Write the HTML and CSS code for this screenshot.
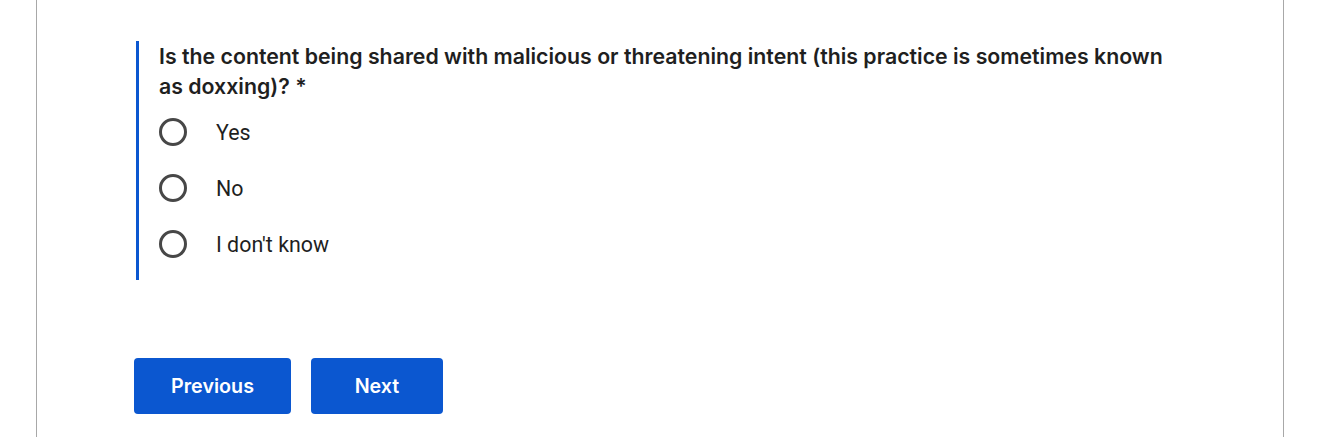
FILE: index.html
```html
<!DOCTYPE html>
<html lang="en">
<head>
<meta charset="utf-8">
<title>Form</title>
<link rel="stylesheet" href="styles.css">
</head>
<body>
<div class="page">
  <div class="content">
    <div class="question" role="radiogroup">
      <div class="q-title">Is the content being shared with malicious or threatening intent (this practice is sometimes known as doxxing)? *</div>
      <label class="option"><span class="radio"></span><span class="opt-text">Yes</span></label>
      <label class="option"><span class="radio"></span><span class="opt-text">No</span></label>
      <label class="option"><span class="radio"></span><span class="opt-text">I don't know</span></label>
    </div>
    <div class="actions">
      <button class="btn btn-prev">Previous</button>
      <button class="btn btn-next">Next</button>
    </div>
  </div>
</div>
</body>
</html>
```

FILE: styles.css
```css
html, body {
  margin: 0;
  padding: 0;
  background: #ffffff;
}
body {
  font-family: Inter, "Open Sans", "Liberation Sans", sans-serif;
  color: #1f1f1f;
}
.page {
  margin-left: 36px;
  width: 1246px;
  height: 437px;
  border-left: 1px solid #a8a8a8;
  border-right: 1px solid #a8a8a8;
  box-sizing: content-box;
}
.content {
  padding: 41px 0 0 99px;
}
.question {
  margin: 0;
  padding: 0 0 8px 20px;
  border-left: 3px solid #0b57d0;
  display: flex;
  flex-direction: column;
  width: 1030px;
}
.q-title {
  max-width: 1015px;
  font-size: 21.3px;
  font-weight: 600;
  line-height: 30px;
  color: #1f1f1f;
  margin-bottom: 3px;
}
.option {
  display: flex;
  align-items: center;
  height: 56px;
  cursor: pointer;
}
.radio {
  width: 22px;
  height: 22px;
  border: 3px solid #474747;
  border-radius: 50%;
  flex: none;
}
.opt-text {
  margin-left: 29px;
  font-family: Roboto, "Liberation Sans", sans-serif;
  font-size: 21.4px;
  color: #1f1f1f;
}
.actions {
  display: flex;
  gap: 20px;
  margin-top: 78px;
  margin-left: -2px;
}
.btn {
  height: 56px;
  border: 0;
  border-radius: 4px;
  background: #0b57d0;
  color: #ffffff;
  font-family: Inter, "Open Sans", sans-serif;
  font-size: 19.7px;
  font-weight: 600;
  cursor: pointer;
}
.btn-prev { width: 157px; }
.btn-next { width: 132px; }
```
